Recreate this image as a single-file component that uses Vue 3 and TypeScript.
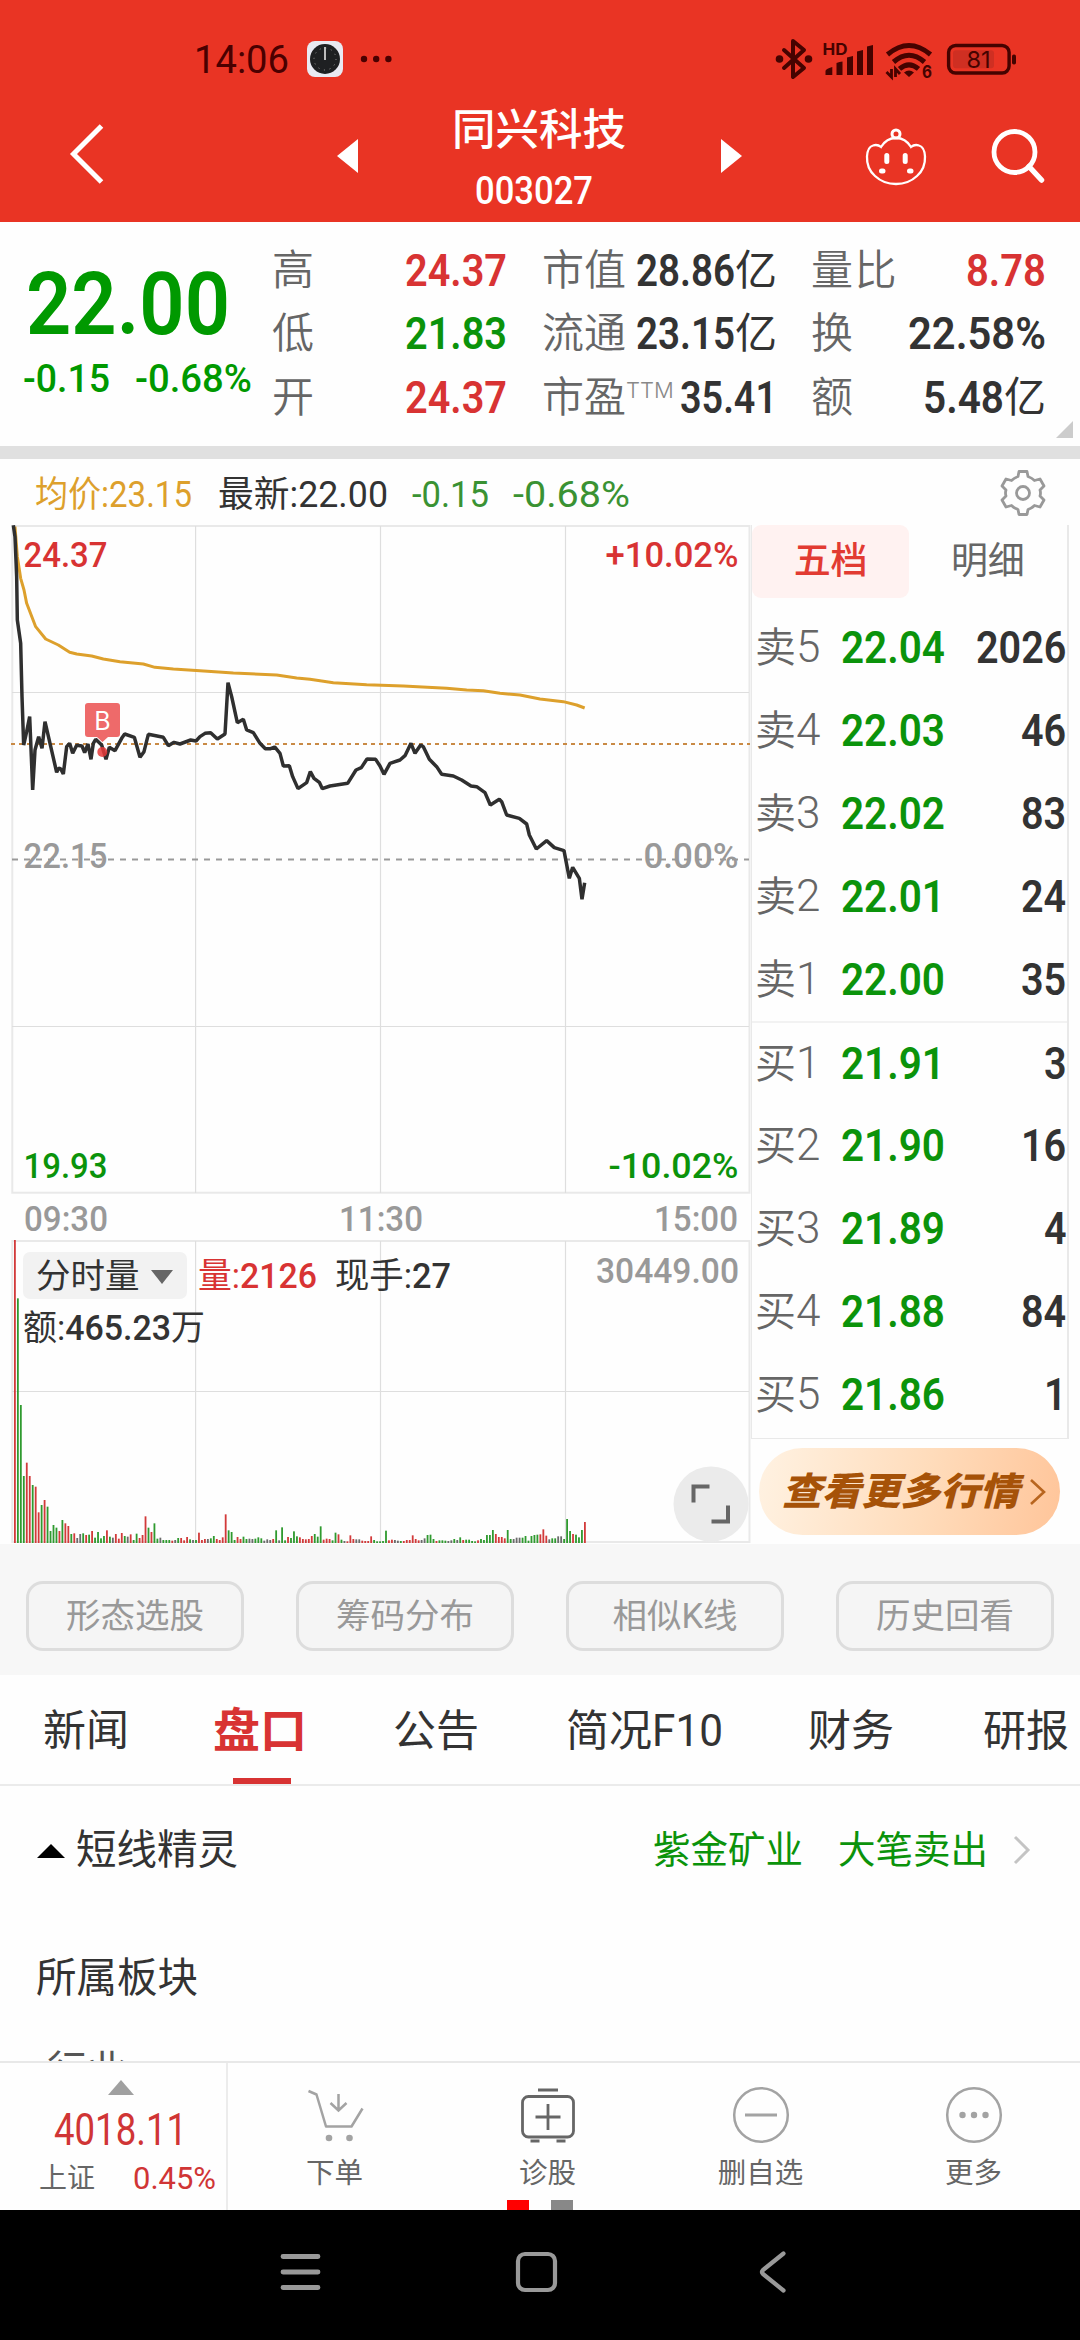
<script setup lang="ts">
import type { Directive } from 'vue'

// Condenses a label horizontally to a given advance width, like the DIN-style numerals of the app.
const vFit: Directive<HTMLElement, number> = {
  mounted(el, { value }) {
    const natural = el.getBoundingClientRect().width
    if (!natural) return
    el.style.transform = `scaleX(${value / natural})`
    el.style.marginRight = `${value - natural}px`
  },
}

interface Stat { label: string; sup?: string; value: string; unit?: string; w: number; tone: string }
const statColumns: { cls: string; rows: Stat[] }[] = [
  {
    cls: 'c1',
    rows: [
      { label: '高', value: '24.37', w: 102, tone: 'up' },
      { label: '低', value: '21.83', w: 102, tone: 'down' },
      { label: '开', value: '24.37', w: 102, tone: 'up' },
    ],
  },
  {
    cls: 'c2',
    rows: [
      { label: '市值', value: '28.86', unit: '亿', w: 99, tone: 'ink' },
      { label: '流通', value: '23.15', unit: '亿', w: 99, tone: 'ink' },
      { label: '市盈', sup: 'TTM', value: '35.41', w: 97, tone: 'ink' },
    ],
  },
  {
    cls: 'c3',
    rows: [
      { label: '量比', value: '8.78', w: 80, tone: 'up' },
      { label: '换', value: '22.58%', w: 138, tone: 'ink' },
      { label: '额', value: '5.48', unit: '亿', w: 81, tone: 'ink' },
    ],
  },
]

const book = [
  ['卖', '5', '22.04', '2026'],
  ['卖', '4', '22.03', '46'],
  ['卖', '3', '22.02', '83'],
  ['卖', '2', '22.01', '24'],
  ['卖', '1', '22.00', '35'],
  ['买', '1', '21.91', '3'],
  ['买', '2', '21.90', '16'],
  ['买', '3', '21.89', '4'],
  ['买', '4', '21.88', '84'],
  ['买', '5', '21.86', '1'],
]

const pricePoints =
  '40,46 45,80 50,200 52,330 62,400 66,560 71,705 80,665 89,620 94,740 98,840 105,720 116,680 126,715 135,635 150,700 170,787 176,775 182,776 190,792 200,710 209,700 218,730 230,706 246,708 254,728 264,702 273,748 280,700 287,688 305,705 318,748 328,712 345,722 365,685 374,672 403,682 420,742 432,725 445,673 460,676 490,682 505,707 522,697 540,702 572,690 588,693 600,680 615,670 632,668 652,687 675,672 684,518 695,560 712,638 730,628 740,660 760,668 780,700 796,716 812,716 824,711 840,730 850,768 868,767 878,800 894,836 920,818 931,785 942,805 958,817 967,836 990,828 1043,820 1068,780 1084,773 1101,747 1127,748 1140,768 1152,793 1170,760 1200,750 1215,737 1233,700 1245,730 1262,705 1270,710 1288,748 1310,770 1325,793 1360,798 1385,810 1413,828 1430,830 1455,848 1471,885 1498,868 1505,875 1520,915 1558,925 1580,942 1588,975 1609,1017 1640,992 1663,1013 1692,1022 1708,1105 1718,1072 1738,1105 1746,1168 1754,1118'
const averagePoints =
  '45,50 52,140 62,205 72,240 80,280 107,350 137,387 175,405 209,427 230,432 275,438 310,447 360,455 430,462 465,472 520,477 600,482 700,489 830,495 890,504 930,508 1000,518 1100,524 1210,528 1340,535 1400,540 1450,542 1500,550 1560,555 1620,567 1690,575 1730,585 1754,594'

// One entry per minute: colour key and height in thirds of a pixel.
const volumes =
  'r909 g734 g414 g201 r241 r201 g174 r169 r92 g114 r129 g109 g36 g54 g46 r36 g69 r59 r51 g27 r29 k15 k27 g29 r24 g25 r36 g16 g33 g14 g21 r38 g19 k16 r27 r13 r30 g21 k19 r26 g9 g28 r15 r24 r80 g46 r33 g59 g13 k16 ' +
  'g9 g9 g9 r7 k9 g15 r15 r8 r18 g11 k9 g9 r31 r9 r12 k12 g14 g21 r12 r9 r17 r86 g38 g33 g9 r18 r12 g19 g12 k13 k12 g13 g17 g14 k7 k11 k9 r12 g38 k8 g47 g8 r18 g15 g35 g20 r17 r12 r11 r12 r21 g27 g19 g50 r10 r13 r12 g8 ' +
  'g31 r26 g10 k6 r5 r23 r12 k11 k11 r7 r6 r6 r20 g9 g5 g5 g6 g37 r8 r10 k9 k7 g6 r6 r9 r9 r23 r12 r8 k9 k14 g24 g25 g12 r6 g8 g8 g7 k6 k8 g12 k9 g17 r9 g10 g10 g6 g5 r8 g12 g9 g24 g24 g39 r27 r18 r18 r14 g39 g12 k12 k16 ' +
  'k16 g16 g21 g7 g21 g24 g25 r26 r41 r22 k11 g14 g14 k20 k20 g12 g72 g36 r27 g25 g17 g39 r63'
const tones: Record<string, string> = { r: '#d23a3a', g: '#2f9a2f', k: '#6b6b6b' }
const rawBars = volumes.split(' ')
const bars = rawBars.map((v, i) => ({
  x: 14 + (i * 570) / (rawBars.length - 1),
  h: Number(v.slice(1)) / 3,
  fill: tones[v[0]],
}))

const tools = ['形态选股', '筹码分布', '相似K线', '历史回看']
</script>

<template>
  <div class="screen">
    <header class="top">
      <div class="status">
        <span v-fit="95" class="clock">14:06</span>
        <svg class="app-clock" width="36" height="36" viewBox="0 0 36 36">
          <rect width="36" height="36" rx="8" fill="#e9eaf2" />
          <circle cx="18" cy="18" r="15" fill="#1e2022" />
          <circle cx="18" cy="18" r="11" fill="none" stroke="#999" stroke-width="1" stroke-dasharray="1 4.76" />
          <path d="M18 6v13" stroke="#bbb" stroke-width="2" />
        </svg>
        <svg class="dots" width="32" height="8" viewBox="0 0 32 8" fill="#4a0000">
          <circle cx="4" cy="4" r="3.2" /><circle cx="16.2" cy="4" r="3.2" /><circle cx="28.4" cy="4" r="3.2" />
        </svg>
        <svg class="radios" width="250" height="44" viewBox="770 37 250 44" fill="#450300">
          <path d="M783 50l20 18-11 9V41l11 9-20 18" fill="none" stroke="#450300" stroke-width="4" stroke-linejoin="round" stroke-linecap="round" />
          <circle cx="778.5" cy="59" r="3.8" /><circle cx="807.5" cy="59" r="3.8" />
          <text x="821.5" y="55" class="hd" textLength="25" lengthAdjust="spacingAndGlyphs">HD</text>
          <path d="M824.5 75v-4q0-2 6.800-4v8zM835.500 75v-12q3-1.500 6-1.500v13.500zM846 75V57.500q3-1 6-1.500v19zM856 75V51.500q3-1 6-1.500v25zM866 75V46.500q3-1 6-1.500v30z" />
          <g fill="none" stroke="#450300" stroke-width="5">
            <path d="M886.500 54.500q21.500-18 43 0" /><path d="M892.500 62q15.500-13.500 31 0" /><path d="M898.500 68.800q9.500-8 19 0" />
          </g>
          <path d="M903 72.500q5-4 10 0l-5 4.500z" />
          <path d="M890.500 69v8l-5-5M894.500 77v-8l4.500 5" fill="none" stroke="#450300" stroke-width="2.800" />
          <text x="921" y="77.500" class="six" textLength="10" lengthAdjust="spacingAndGlyphs">6</text>
          <rect x="947.600" y="45.500" width="60.500" height="27.500" rx="7" fill="none" stroke="#450300" stroke-width="3.400" />
          <rect x="952" y="50.300" width="41" height="18" rx="3" fill="#cf2f22" />
          <rect x="1011" y="54.500" width="4" height="10" rx="1.800" />
          <text x="965.500" y="68.300" class="pct" textLength="24">81</text>
        </svg>
      </div>
      <div class="nav">
        <svg class="back" width="36" height="62" viewBox="0 0 36 62"><path d="M32.500 3L4.500 31l28 28" fill="none" stroke="#fff" stroke-width="5" /></svg>
        <svg class="prev" width="21" height="34" viewBox="0 0 21 34"><path d="M21 0v34L0 17z" fill="#fff" /></svg>
        <div class="title">
          <h1>同兴科技</h1>
          <p><span v-fit="118">003027</span></p>
        </div>
        <svg class="next" width="21" height="34" viewBox="0 0 21 34"><path d="M0 0v34l21-17z" fill="#fff" /></svg>
        <svg class="bot" width="62" height="58" viewBox="0 0 62 58" fill="none" stroke="#fff" stroke-width="2.300">
          <circle cx="31" cy="6" r="4" stroke-width="3" />
          <path d="M16 19q-3.500-3-8-1.500-5.500 1.500-6 11-.500 12 8 19.500 8.500 8 21 8t21-8q8.500-7.500 8-19.500-.5-9.500-6-11-4.500-1.500-8 1.500-5.500-9-15-9t-15 9z" />
          <path d="M21.800 27.500v6M40.200 27.500v6" stroke-width="5" stroke-linecap="round" />
          <path d="M16.500 43h1.500M44.500 43h1.500" stroke-width="5" stroke-linecap="round" />
        </svg>
        <svg class="find" width="54" height="56" viewBox="0 0 54 56" fill="none" stroke="#fff">
          <circle cx="23.500" cy="24" r="20.500" stroke-width="4.800" /><path d="M38 38.500L50.500 52" stroke-width="5.500" stroke-linecap="round" />
        </svg>
      </div>
    </header>

    <section class="quote">
      <div class="last">
        <div class="price"><span v-fit="204">22.00</span></div>
        <div class="chg"><span v-fit="87">-0.15</span><span v-fit="117">-0.68%</span></div>
      </div>
      <div v-for="col in statColumns" :key="col.cls" class="stats" :class="col.cls">
        <div v-for="s in col.rows" :key="s.label" class="stat">
          <span class="label">{{ s.label }}<sup v-if="s.sup">{{ s.sup }}</sup></span>
          <span class="val" :class="s.tone"><span v-fit="s.w" class="num">{{ s.value }}</span><i v-if="s.unit">{{ s.unit }}</i></span>
        </div>
      </div>
      <i class="corner"></i>
    </section>

    <section class="info">
      <span v-fit="157" class="gold">均价:23.15</span>
      <span v-fit="170" class="ink">最新:22.00</span>
      <span v-fit="77" class="soft">-0.15</span>
      <span v-fit="117" class="soft">-0.68%</span>
      <svg class="gear" width="46" height="46" viewBox="-23 -23 46 46" fill="none" stroke="#999" stroke-width="2.800" stroke-linejoin="round">
        <path d="M-5-16.500l1-5h8l1 5q4 1.500 6.500 4l5.500-1.500 4 7-4 4q1 3 0 6l4 4-4 7-5.500-1.500q-2.500 2.500-6.500 4l-1 5h-8l-1-5q-4-1.500-6.500-4L-17 14l-4-7 4-4q-1-3 0-6l-4-4 4-7 5.500 1.500q2.500-2.500 6.500-4z" />
        <circle r="6.500" />
      </svg>
    </section>

    <section class="market">
      <div class="charts">
        <svg width="751" height="670" viewBox="0 525 751 670" class="plot">
          <g fill="none" stroke="#e9e9e9" stroke-width="2">
            <rect x="12.300" y="526" width="737.200" height="666.700" />
          </g>
          <path d="M195.600 526v667M380.500 526v667M565.500 526v667M12 692.500h737M12 1026.500h737" fill="none" stroke="#dedede" stroke-width="1.200" />
          <path d="M11 744h739" stroke="#c98a45" stroke-width="2" stroke-dasharray="4 4" />
          <path d="M12 859.500h737" stroke="#999" stroke-width="1.800" stroke-dasharray="6 6" />
          <g transform="translate(0 510) scale(.33333)" fill="none" stroke-linejoin="round">
            <polyline :points="averagePoints" stroke="#dda02c" stroke-width="9" />
            <polyline :points="pricePoints" stroke="#2f2f2f" stroke-width="10.500" stroke-linejoin="bevel" />
          </g>
          <g class="axis">
            <text x="23.500" y="567" textLength="84" lengthAdjust="spacingAndGlyphs" fill="#d83333">24.37</text>
            <text x="605.500" y="567" textLength="133" lengthAdjust="spacingAndGlyphs" fill="#d83333">+10.02%</text>
            <text x="23.500" y="868" textLength="84" lengthAdjust="spacingAndGlyphs" fill="#999">22.15</text>
            <text x="643.500" y="868" textLength="95" lengthAdjust="spacingAndGlyphs" fill="#999">0.00%</text>
            <text x="23.500" y="1178" textLength="84" lengthAdjust="spacingAndGlyphs" fill="#0b930b">19.93</text>
            <text x="608.500" y="1178" textLength="130" lengthAdjust="spacingAndGlyphs" fill="#0b930b">-10.02%</text>
          </g>
          <path d="M88 703h29q3 0 3 3v28q0 3-3 3h-9l-5.500 5-5.500-5h-9q-3 0-3-3v-28q0-3 3-3z" fill="#ee6a6a" />
          <text x="102.500" y="729.500" class="flag" text-anchor="middle">B</text>
          <circle cx="102.300" cy="752" r="5" fill="#e63a3a" fill-opacity=".85" />
        </svg>
        <div class="times">
          <span v-fit="84">09:30</span><span v-fit="84">11:30</span><span v-fit="84">15:00</span>
        </div>
        <div class="volume">
          <svg width="751" height="304" viewBox="0 1240 751 304" class="plot">
            <rect x="12.300" y="1241" width="737.200" height="301" fill="none" stroke="#e9e9e9" stroke-width="2" />
            <path d="M195.600 1241v302M380.500 1241v302M565.500 1241v302M12 1391.500h737" fill="none" stroke="#dedede" stroke-width="1.200" />
            <rect v-for="(b, i) in bars" :key="i" :x="b.x" :y="1543 - b.h" width="1.800" :height="b.h" :fill="b.fill" />
          </svg>
          <div class="legend">
            <div class="line">
              <button class="picker">分时量<i></i></button>
              <span v-fit="119" class="up mix">量:<b>2126</b></span>
              <span v-fit="116" class="ink mix hand">现手:<b>27</b></span>
              <span v-fit="143" class="max">30449.00</span>
            </div>
            <div class="line two"><span v-fit="182" class="ink mix">额:<b>465.23</b>万</span></div>
          </div>
          <svg class="expand" width="76" height="76" viewBox="0 0 76 76">
            <circle cx="38" cy="38" r="37.500" fill="#ebebeb" />
            <path d="M36.500 20.500H20.500v16M38.500 55.500H55V39.500" fill="none" stroke="#666" stroke-width="4" />
          </svg>
        </div>
      </div>
      <div class="side">
        <div class="depth">
          <div class="switch"><span class="on">五档</span><span>明细</span></div>
          <div v-for="(r, i) in book" :key="i" class="level" :class="{ split: i === 5 }">
            <span class="who">{{ r[0] }}<em>{{ r[1] }}</em></span>
            <span v-fit="104" class="num down">{{ r[2] }}</span>
            <span class="qty"><span v-fit="r[3].length * 22.600" class="num">{{ r[3] }}</span></span>
          </div>
        </div>
        <button class="more">
          <span v-fit="237">查看更多行情</span>
          <svg width="18" height="28" viewBox="0 0 18 28"><path d="M2 2l13 12L2 26" fill="none" stroke="#b8651f" stroke-width="2.600" /></svg>
        </button>
      </div>
    </section>

    <section class="tools"><button v-for="t in tools" :key="t">{{ t }}</button></section>

    <nav class="tabs">
      <span class="t1">新闻</span><span class="t2 active">盘口</span><span class="t3">公告</span><span class="t4">简况<em v-fit="71">F10</em></span><span class="t5">财务</span><span class="t6">研报</span>
    </nav>

    <section class="detail">
      <div class="spirit">
        <i class="tri"></i><span class="name">短线精灵</span>
        <span class="hot">紫金矿业</span><span class="act">大笔卖出</span>
        <svg width="18" height="30" viewBox="0 0 18 30"><path d="M2 2l13 13L2 28" fill="none" stroke="#c4c4c4" stroke-width="3" /></svg>
      </div>
      <h2>所属板块</h2>
      <p class="trade">行业</p>
    </section>

    <footer class="dock">
      <div class="index">
        <i class="tri"></i>
        <div class="pts"><span v-fit="133">4018.11</span></div>
        <div class="pair"><span>上证</span><span v-fit="83" class="rate">0.45%</span></div>
      </div>
      <div class="item">
        <svg width="60" height="60" viewBox="304 2085 60 60" fill="none" stroke="#a3a3a3" stroke-width="2.500">
          <path d="M307.500 2091l8 3.500 9.500 32h25.500l11-18" stroke-linejoin="round" />
          <path d="M337.500 2094v16M329.500 2103l8 7.500 8-7.500" />
          <circle cx="328" cy="2138" r="3.300" fill="#a3a3a3" stroke="none" /><circle cx="348.500" cy="2138" r="3.300" fill="#a3a3a3" stroke="none" />
        </svg>
        <span>下单</span>
      </div>
      <div class="item">
        <svg width="60" height="60" viewBox="517.500 2085 60 60" fill="none" stroke="#666" stroke-width="2.800">
          <rect x="522" y="2096.500" width="51" height="40.500" rx="6" /><path d="M537.500 2090h20M530 2141h9M556 2141h9M547.500 2104v26M535 2117h25" />
        </svg>
        <span>诊股</span>
      </div>
      <div class="item">
        <svg width="60" height="60" viewBox="0 0 60 60" fill="none" stroke="#a3a3a3" stroke-width="2.500">
          <circle cx="30" cy="30" r="26.800" /><path d="M14 30h32" stroke-width="3" />
        </svg>
        <span>删自选</span>
      </div>
      <div class="item">
        <svg width="60" height="60" viewBox="0 0 60 60" fill="#a3a3a3">
          <circle cx="30" cy="30" r="26.800" fill="none" stroke="#a3a3a3" stroke-width="2.500" />
          <circle cx="18.500" cy="30" r="3.200" /><circle cx="30" cy="30" r="3.200" /><circle cx="41.500" cy="30" r="3.200" />
        </svg>
        <span>更多</span>
      </div>
      <div class="pager"><i></i><i></i></div>
    </footer>

    <div class="sysnav">
      <svg width="1080" height="130" viewBox="0 0 1080 130" fill="none" stroke="#999" stroke-linecap="round" stroke-linejoin="round">
        <path d="M283 46.500h35M283 62h35M283 77.500h35" stroke-width="4.800" />
        <rect x="518" y="44" width="37" height="36" rx="7" stroke-width="4.200" />
        <path d="M783.500 43.500L763 60q-2 2 0 4l20.500 16.500" stroke-width="4.200" />
      </svg>
    </div>
  </div>
</template>

<style>
html, body { margin: 0; background: #fff; }
</style>

<style scoped>
.screen {
  width: 1080px;
  height: 2340px;
  overflow: hidden;
  background: #fefefe;
  color: #333;
  font-family: Roboto, "Noto Sans CJK SC", sans-serif;
  display: flex;
  flex-direction: column;
}
.screen * { box-sizing: border-box; }
.screen > * { flex: none; }
span, em, i { font-style: normal; white-space: nowrap; }
h1, h2, p { margin: 0; font-weight: 400; }
button { border: 0; padding: 0; font-family: inherit; white-space: nowrap; }
svg { display: block; flex: none; }
span, em { transform-origin: 0 50%; }
.up { color: #d83333; }
.down { color: #0b930b; }
.ink { color: #333; }

.top { height: 222px; background: #e93424; }
.status { height: 100px; display: flex; align-items: center; padding: 18px 0 0 194px; }
.clock { display: inline-block; font-size: 39.500px; line-height: 60px; color: #4a0000; padding-top: 2px; }
.app-clock { margin-left: 18px; }
.dots { margin-left: 17px; }
.radios { margin-left: 379px; }
.hd { font: 700 16px Inter, sans-serif; }
.six { font: 700 18px Inter, sans-serif; }
.pct { font: 400 23.500px Inter, sans-serif; }
.nav { height: 122px; display: flex; align-items: flex-start; color: #fff; }
.back { margin: 23px 0 0 69px; }
.prev { margin: 39px 0 0 232px; }
.title { width: 180px; margin-left: 91px; text-align: center; }
.title h1 { font-size: 43.500px; line-height: 60px; margin-top: 1px; width: 180px; font-weight: 500; }
.title p { font-size: 39.500px; line-height: 50px; font-weight: 500; margin-top: 5px; width: 169px; }
.title p span { display: inline-block; }
.next { margin: 39px 0 0 92px; }
.bot { margin: 28px 0 0 123px; }
.find { margin: 28px 0 0 64px; }

.quote { height: 237px; border-bottom: 13px solid #e0e0e0; display: flex; position: relative; padding-top: 17px; }
.last { width: 272px; color: #009900; font-weight: 700; }
.price { font-size: 87px; line-height: 90px; margin: 20px 0 0 26px; font-weight: 600; }
.chg { display: flex; gap: 25px; font-size: 39.500px; line-height: 46px; margin: 7px 0 0 23px; font-weight: 500; }
.price span, .chg span { display: inline-block; }
.stat { display: flex; justify-content: space-between; align-items: center; height: 63.500px; }
.label { font-size: 42px; line-height: 60px; color: #666; font-weight: 350; }
.label sup { font: 300 22px/1 Inter, sans-serif; color: #888; vertical-align: 14px; }
.val { display: flex; align-items: center; font-size: 42px; line-height: 60px; }
.num { display: inline-block; font-size: 45px; line-height: 60px; font-weight: 600; }
.c1 { width: 235px; }
.c2 { width: 235px; margin-left: 35px; }
.c3 { width: 235px; margin-left: 34px; }
.c3 .label { letter-spacing: 1.500px; }
.corner { position: absolute; right: 7px; bottom: 8px; border-left: 17px solid transparent; border-bottom: 17px solid #ccc; }

.info { height: 66px; display: flex; align-items: center; padding: 6px 0 0 35px; font-size: 36px; line-height: 60px; }
.info span { display: inline-block; }
.gold { color: #dda02c; }
.info .ink { margin-left: 26px; }
.soft { color: #3a9233; margin-left: 24px; }
.gear { margin-left: auto; margin-right: 34px; margin-bottom: 4px; }

.market { height: 1019px; display: flex; }
.charts { width: 751px; }
.plot { overflow: visible; }
.axis text { font: 500 35.200px Roboto, sans-serif; }
.flag { font: 400 25px Inter, sans-serif; fill: #fff; }
.times { height: 45px; display: flex; justify-content: space-between; padding: 0 13px 0 24px; color: #999; font-size: 35.200px; line-height: 49px; font-weight: 500; }
.times span { display: inline-block; }
.volume { position: relative; height: 304px; }
.legend { position: absolute; inset: 12px 0 auto 23px; }
.line { display: flex; height: 47px; align-items: center; font-size: 35px; line-height: 47px; }
.line > span { display: inline-block; padding-top: 2px; }
.two { margin-top: 5px; }
.mix b { font-weight: 500; }
.picker { width: 164px; height: 47px; border-radius: 7px; background: #f2f2f2; color: #333; font-size: 34.500px; line-height: 47px; display: flex; align-items: center; padding: 2px 0 0 13px; }
.picker i { border: 11px solid transparent; border-top: 14px solid #666; border-bottom: 0; margin-left: 11px; }
.line .up { margin-left: 11px; }
.hand { margin-left: 18px; }
.line .max { color: #999; font-weight: 500; margin-left: auto; padding: 0 0 9px; translate: -12px 0; }
.expand { position: absolute; left: 673px; top: 226px; }

.side { width: 317.500px; }
.depth { height: 914px; border: 1px solid #e9e9e9; border-top: 0; border-right-width: 2px; }
.switch { display: flex; height: 73px; margin-bottom: 8px; font-size: 37px; line-height: 74px; color: #666; }
.switch span { width: 159px; text-align: center; border-radius: 9px; }
.switch .on { background: #fff2f1; color: #e23b32; font-weight: 500; }
.level { height: 83px; display: flex; align-items: center; padding-left: 3px; color: #333; }
.split { border-top: 2px solid #f2f2f2; }
.who { font-size: 41px; line-height: 60px; color: #666; width: 86px; font-weight: 350; }
.who em { font-size: 44px; font-weight: 350; }
.qty { margin-left: auto; }
.more { width: 301px; height: 87px; margin: 9px 0 0 8px; border-radius: 44px; background: linear-gradient(100deg, #fff2e2, #ffdcbb 55%, #ffc59a); display: flex; align-items: center; padding-left: 23px; color: #a65208; }
.more span { display: inline-block; font-size: 38px; font-weight: 800; font-style: italic; line-height: 60px; }
.more svg { margin-left: 10px; }

.tools { height: 131px; background: #f7f7f7; display: flex; gap: 52px; padding: 37px 26px 0; }
.tools button { width: 218px; height: 70px; border: 3px solid #ddd; border-radius: 17px; background: #f5f5f5; color: #999; font-size: 34.500px; line-height: 64px; }

.tabs { height: 111px; border-bottom: 2px solid #ebebeb; display: flex; font-size: 43px; line-height: 112px; padding-left: 43px; }
.tabs span { display: block; }
.tabs em { display: inline-block; font-size: 45px; }
.t2 { margin-left: 84px; }
.t3 { margin-left: 86px; }
.t4 { margin-left: 87px; }
.t5 { margin-left: 85px; }
.t6 { margin-left: 89px; }
.active { font-size: 47px; font-weight: 700; color: #d83333; position: relative; }
.active::after { content: ''; position: absolute; left: 20px; bottom: 0; width: 58px; height: 6px; background: #d83333; }

.detail { height: 275px; overflow: hidden; }
.spirit { display: flex; align-items: center; height: 128px; padding-left: 37px; font-size: 40.500px; line-height: 60px; }
.spirit .tri { border: 14px solid transparent; border-bottom: 14px solid #000; border-top: 0; margin-top: 2px; }
.name { margin-left: 11px; width: 577px; }
.hot, .act { color: #0b930b; font-size: 37.500px; }
.act { margin-left: 35px; }
.spirit svg { margin-left: 25px; }
.detail h2 { font-size: 40.500px; line-height: 60px; margin: 34px 0 0 36px; }
.trade { font-size: 40px; line-height: 60px; margin: 33px 0 0 47px; color: #555; height: 24px; }

.dock { height: 149px; border-top: 2px solid #e8e8e8; display: flex; position: relative; }
.index { width: 228px; border-right: 2px solid #ececec; }
.index .tri { display: block; width: 0; border: 13px solid transparent; border-bottom: 15px solid #a0a0a0; border-top: 0; margin: 17px 0 0 108px; }
.pts { font-size: 43.500px; line-height: 50px; color: #d03535; margin: 11px 0 0 54px; }
.pts span, .rate { display: inline-block; }
.pair { display: flex; gap: 38px; font-size: 28px; line-height: 40px; color: #666; margin: 3px 0 0 39px; }
.rate { color: #d03535; font-size: 31px; }
.item { width: 213px; display: flex; flex-direction: column; align-items: center; padding-top: 22px; color: #666; font-size: 28.500px; line-height: 40px; }
.item span { margin-top: 9px; }
.pager { position: absolute; left: 507px; bottom: 0; display: flex; gap: 22px; }
.pager i { width: 22px; height: 10px; background: #f00; }
.pager i + i { background: #888; }
.sysnav { height: 130px; background: #000; }
</style>
